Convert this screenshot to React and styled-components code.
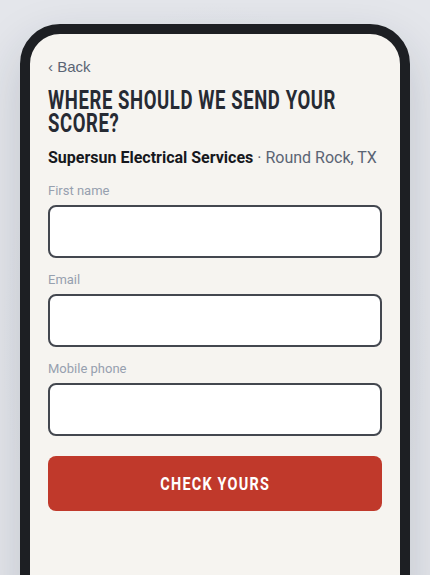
import React from 'react';
import styled, { createGlobalStyle } from 'styled-components';

const GlobalStyle = createGlobalStyle`
  * { box-sizing: border-box; }
  html, body {
    margin: 0;
    padding: 0;
    background: #e4e6eb;
    font-family: Roboto, "Noto Sans", sans-serif;
  }
`;

const Page = styled.div`
  width: 430px;
  height: 575px;
  overflow: hidden;
  padding: 24px 20px 0;
  background: radial-gradient(ellipse at 50% 60%, #d3d7df 0%, #e4e6eb 70%);
`;

const Phone = styled.div`
  height: 600px;
  border: 10px solid #1d1f23;
  border-radius: 40px;
  background: #f6f4f0;
  box-shadow: 0 20px 50px rgba(30, 40, 60, 0.18);
  padding: 24px 18px 0;
  display: flex;
  flex-direction: column;
`;

const BackLink = styled.a`
  font-family: "Liberation Sans", Arial, sans-serif;
  font-size: 15px;
  color: #5b6474;
  line-height: 18px;
  cursor: pointer;
`;

// condensed display type: Roboto bold narrowed, laid out at the wider width
const Title = styled.h1`
  margin: 13px 0 0;
  width: 135%;
  transform: scaleX(0.74);
  transform-origin: left top;
  font-family: Roboto, sans-serif;
  font-weight: 700;
  font-size: 25px;
  line-height: 23px;
  letter-spacing: 0.8px;
  color: #262a33;
  text-transform: uppercase;
`;

const Business = styled.p`
  margin: 12px 0 0;
  font-size: 16px;
  line-height: 22px;
  color: #5b6474;
  white-space: nowrap;
`;

const Name = styled.strong`
  font-weight: 700;
  color: #16181d;
`;

const Form = styled.form`
  margin-top: 14px;
  display: flex;
  flex-direction: column;
  gap: 14px;
`;

const Field = styled.label`
  display: flex;
  flex-direction: column;
  gap: 6px;
`;

const LabelText = styled.span`
  font-size: 13px;
  line-height: 16px;
  color: #97a0af;
`;

const Input = styled.input`
  height: 53px;
  border: 2px solid #43474f;
  border-radius: 8px;
  background: #fff;
  padding: 0 14px;
  font-size: 16px;
  outline: none;
`;

const Submit = styled.button`
  margin-top: 6px;
  height: 55px;
  border: none;
  border-radius: 8px;
  background: #c0392b;
  color: #fff;
  cursor: pointer;
  display: flex;
  align-items: center;
  justify-content: center;
`;

const SubmitText = styled.span`
  display: inline-block;
  transform: scaleX(0.76);
  font-family: Roboto, sans-serif;
  font-weight: 700;
  font-size: 19px;
  letter-spacing: 1.6px;
  text-transform: uppercase;
`;

const fields = ['First name', 'Email', 'Mobile phone'];

const App = () => (
  <>
    <GlobalStyle />
    <Page>
      <Phone>
        <BackLink>‹ Back</BackLink>
        <Title>Where should we send your score?</Title>
        <Business>
          <Name>Supersun Electrical Services</Name> · Round Rock, TX
        </Business>
        <Form onSubmit={(e) => e.preventDefault()}>
          {fields.map((f) => (
            <Field key={f}>
              <LabelText>{f}</LabelText>
              <Input type="text" />
            </Field>
          ))}
          <Submit type="submit">
            <SubmitText>Check yours</SubmitText>
          </Submit>
        </Form>
      </Phone>
    </Page>
  </>
);

export default App;
